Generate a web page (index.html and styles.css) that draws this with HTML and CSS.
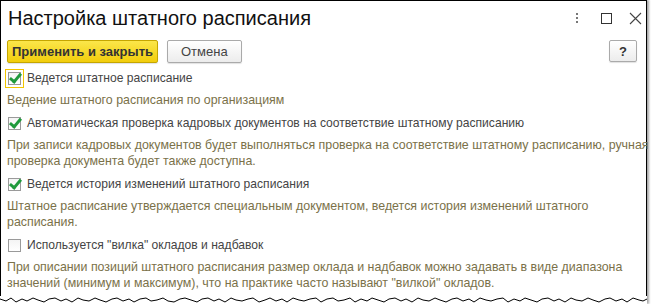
FILE: index.html
```html
<!DOCTYPE html>
<html lang="ru">
<head>
    <meta charset="UTF-8">
    <title>Настройка штатного расписания</title>
    <link rel="stylesheet" href="styles.css">
</head>
<body>

    <div class="window">
        <!-- Title -->
        <div class="titlebar">
            <div class="title">Настройка штатного расписания</div>
            <div class="win-buttons">
                <span class="more"><i></i><i></i><i></i></span>
                <span class="maximize"></span>
                <svg class="close" width="13" height="13" viewBox="0 0 13 13">
                    <path d="M1 1 L12 12 M12 1 L1 12" stroke="#444" stroke-width="1.1" fill="none"/>
                </svg>
            </div>
        </div>

        <!-- Command bar -->
        <div class="toolbar">
            <button class="btn btn-default">Применить и закрыть</button>
            <button class="btn">Отмена</button>
            <button class="btn btn-help">?</button>
        </div>

        <div class="form">
            <label class="opt focused"><span class="check on"></span>Ведется штатное расписание</label>
            <div class="hint">Ведение штатного расписания по организациям</div>

            <label class="opt"><span class="check on"></span>Автоматическая проверка кадровых документов на соответствие штатному расписанию</label>
            <div class="hint">При записи кадровых документов будет выполняться проверка на соответствие штатному расписанию, ручная<br>проверка документа будет также доступна.</div>

            <label class="opt"><span class="check on"></span>Ведется история изменений штатного расписания</label>
            <div class="hint">Штатное расписание утверждается специальным документом, ведется история изменений штатного<br>расписания.</div>

            <label class="opt"><span class="check"></span>Используется "вилка" окладов и надбавок</label>
            <div class="hint">При описании позиций штатного расписания размер оклада и надбавок можно задавать в виде диапазона<br>значений (минимум и максимум), что на практике часто называют "вилкой" окладов.</div>
        </div>

        <svg class="torn" width="647" height="8" viewBox="0 0 647 8" preserveAspectRatio="none">
            <polyline fill="none" stroke="#000" stroke-width="1"
                points="0,3 6,5 11,2 16,6 22,3 27,5 33,2 38,4 44,6 49,3 55,2 61,5 66,3 72,6 78,2 83,4 89,5 95,2 100,4 106,6 112,3 117,2 123,5 129,3 134,6 140,3 146,2 151,5 157,4 163,2 168,5 174,6 180,3 185,2 191,4 197,6 202,3 208,2 214,5 219,3 225,6 231,2 236,4 242,5 248,3 253,2 259,6 265,4 270,2 276,5 282,3 287,6 293,2 299,4 304,5 310,3 316,2 321,6 327,3 333,2 338,5 344,4 350,2 355,6 361,3 367,5 372,2 378,4 384,6 389,3 395,2 401,5 406,3 412,6 418,2 423,4 429,5 435,2 440,4 446,6 452,3 457,2 463,5 469,3 474,6 480,2 486,4 491,5 497,3 503,2 508,6 514,3 520,5 525,2 531,4 537,6 542,3 548,2 554,5 559,3 565,6 571,2 576,4 582,5 588,2 593,4 599,6 605,3 610,2 616,5 622,3 627,6 633,2 639,4 643,5 647,3"/>
        </svg>
    </div>

</body>
</html>
```

FILE: styles.css
```css
body {
    margin: 0;
    background: #fff;
    font-family: "Liberation Sans", Arial, sans-serif;
    width: 651px;
    height: 304px;
    overflow: hidden;
}

.window {
    width: 645px;
    height: 303px;
    border: 1px solid #000;
    border-bottom: none;
    box-shadow: 2px 0 2px rgba(0, 0, 0, 0.35);
    display: flex;
    flex-direction: column;
    position: relative;
}

/* Title */
.titlebar {
    height: 38px;
    display: flex;
    align-items: center;
    justify-content: space-between;
}

.title {
    font-size: 20px;
    color: #111;
    padding-left: 7px;
    margin-top: -3px;
}

.win-buttons {
    display: flex;
    align-items: center;
    margin-top: -4px;
    padding-right: 4px;
}

.more {
    display: flex;
    flex-direction: column;
    gap: 2px;
    margin-right: 23px;
}

.more i {
    display: block;
    width: 2px;
    height: 2px;
    background: #777;
}

.maximize {
    width: 9px;
    height: 9px;
    border: 1px solid #333;
    margin-right: 17px;
}

/* Command bar */
.toolbar {
    display: flex;
    align-items: center;
    gap: 9px;
    padding: 0 9px 0 6px;
    height: 24px;
}

.btn {
    height: 23px;
    font-family: inherit;
    font-size: 13px;
    color: #444;
    background: linear-gradient(#ffffff, #ececec);
    border: 1px solid #aaa;
    border-radius: 2px;
    padding: 0 13px;
    white-space: nowrap;
    box-shadow: 0 1px 1px rgba(0, 0, 0, 0.12);
}

.btn-default {
    width: 151px;
    padding: 0;
    font-weight: bold;
    color: #333;
    background: linear-gradient(#fbe64a, #f2cd0c);
    border-color: #c5a600;
}

.btn-help {
    margin-left: auto;
    width: 28px;
    height: 22px;
    padding: 0;
    font-weight: bold;
    color: #333;
}

/* Form */
.form {
    flex: 1;
    padding: 6px 0 0 6px;
    font-size: 12px;
}

.opt {
    display: flex;
    align-items: center;
    height: 18px;
    color: #444;
    margin-top: 6px;
    font-size: 12.1px;
    white-space: nowrap;
}

.opt:first-child {
    margin-top: 0;
}

.opt.focused {
    margin-bottom: 3px;
}

.check {
    position: relative;
    width: 11px;
    height: 11px;
    border: 1px solid #9a9a9a;
    background: linear-gradient(#f4f4f4, #fff);
    margin: 0 6px 0 1px;
    flex-shrink: 0;
}

.focused .check {
    outline: 1px solid #f2c500;
    outline-offset: 2px;
}

.check.on::after {
    content: "";
    position: absolute;
    left: 3px;
    top: -2px;
    width: 4px;
    height: 9px;
    border: solid #1f9a3c;
    border-width: 0 3px 3px 0;
    transform: rotate(40deg);
}

.hint {
    color: #7a7149;
    font-size: 12.4px;
    line-height: 16px;
    margin-top: 5px;
    white-space: nowrap;
}

.torn {
    display: block;
    margin: 0 0 0 -1px;
    background: #fff;
    height: 8px;
}
```
